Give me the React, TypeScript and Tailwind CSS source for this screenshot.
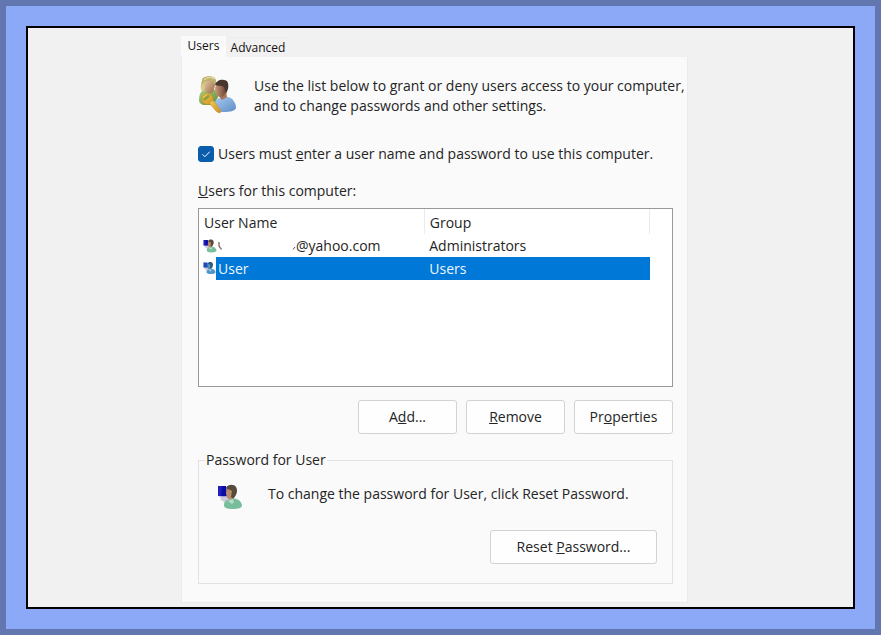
import React, { useState } from "react";

function AccountsIcon() {
  return (
    <svg viewBox="0 0 40 40" className="h-10 w-10 shrink-0" aria-hidden="true">
      <defs>
        <linearGradient id="hair" x1="0" y1="0" x2="1" y2="1">
          <stop offset="0" stopColor="#b9ad62" />
          <stop offset="0.45" stopColor="#d9cf92" />
          <stop offset="1" stopColor="#8f8440" />
        </linearGradient>
        <linearGradient id="faceA" x1="0" y1="0" x2="1" y2="1">
          <stop offset="0" stopColor="#e8c8a8" />
          <stop offset="1" stopColor="#9c6a48" />
        </linearGradient>
        <linearGradient id="faceB" x1="0" y1="0" x2="1" y2="0">
          <stop offset="0" stopColor="#c99a7c" />
          <stop offset="1" stopColor="#6d4431" />
        </linearGradient>
        <linearGradient id="shirtA" x1="0" y1="0" x2="1" y2="1">
          <stop offset="0" stopColor="#b4cf7c" />
          <stop offset="1" stopColor="#5f8c38" />
        </linearGradient>
        <linearGradient id="shirtB" x1="0" y1="0" x2="1" y2="1">
          <stop offset="0" stopColor="#a9cdf1" />
          <stop offset="1" stopColor="#5d8cc7" />
        </linearGradient>
        <linearGradient id="key" x1="0" y1="0" x2="1" y2="1">
          <stop offset="0" stopColor="#f1ce55" />
          <stop offset="1" stopColor="#d08e24" />
        </linearGradient>
      </defs>
      <path d="M1 25c0-6 2-9 6-11h8c3 1 5 4 5 8l-4 8H5c-3-1-4-3-4-5z" fill="url(#shirtA)" />
      <path d="M3 15C2 8 4 3 9 1.500c5-1.500 9 1 9 5 0 2 0 4-2 6L6 17z" fill="url(#hair)" />
      <ellipse cx="11.500" cy="11.500" rx="5" ry="7" fill="url(#faceA)" />
      <path d="M4 9c3-4 8-4 13-2l1-2C15 1 7 0 4 4z" fill="#bdb068" />
      <path d="M6 5c3-3 7-3 10-1" fill="none" stroke="#e4dbaa" strokeWidth="1.200" />
      <path d="M16 32c0-6 3-9 8-10h6c4 1 8 5 8 11-1 3-6 4-12 4-6 0-10-1-10-5z" fill="url(#shirtB)" />
      <path d="M20 20l4 5 5-3-1-5z" fill="#a97456" />
      <ellipse cx="22.500" cy="14.500" rx="5.500" ry="7.500" fill="url(#faceB)" />
      <path d="M17 10c1-4 5-6 9-5 4 0 5 4 4 9l-2 5-2-7c-3-2-6-1-9-2z" fill="#49372d" />
      <circle cx="9.500" cy="24" r="5.500" fill="url(#key)" stroke="#bc8b26" strokeWidth="0.600" />
      <path d="M6.500 24.500l4-3.500" stroke="#8b9d3c" strokeWidth="2.400" strokeLinecap="round" />
      <path d="M11 28l4-3 4 5 4 6-1 2-3-1z" fill="url(#key)" stroke="#c18a2b" strokeWidth="0.500" />
    </svg>
  );
}

function UserIcon({ className, selected = false }: { className: string; selected?: boolean }) {
  const shirt = selected ? "#4e96c9" : "#78bd9c";
  const screen = selected ? "#1550b8" : "#0b0ba8";
  const hair = selected ? "#245b86" : "#594a3c";
  const face = selected ? "#5c8db2" : "#b98b68";
  return (
    <svg viewBox="0 0 26 26" className={className} aria-hidden="true">
      <path d="M1 2h8l2 11-10-1z" fill={screen} />
      <path d="M1 2h4L4 12H1z" fill="#4040d0" opacity="0.400" />
      <path d="M3 13l8-1 2 4-4 3-5-3z" fill="#c9cbdc" />
      <path d="M7 21c0-4 3-5 7-6 6-2 11 3 11 6.500 0 2.500-4 3.500-9 3.500-6 0-9-1-9-4z" fill={shirt} />
      <path d="M11 17l5-2 1 3-2 2z" fill="#d3eadc" opacity="0.700" />
      <ellipse cx="13" cy="9" rx="4" ry="6.500" fill={face} />
      <path d="M9 4c2-4 8-4 10-1 2 3 1 8-3 12l-2-2 1-6c-2-2-4-1-6-3z" fill={hair} />
    </svg>
  );
}

const buttonClass =
  "h-[34px] rounded-[3px] border border-[#d2d2d2] bg-[#fefefe] text-center hover:bg-[#f3f7fb]";

export default function App() {
  const [required, setRequired] = useState(true);

  return (
    <div className="flex min-h-screen flex-col border-[6px] border-[#6277b0] bg-[#8ca9f8] p-5 font-['Open_Sans','Noto_Sans',sans-serif] text-[14px] leading-5 text-[#242424]">
      <main className="flex flex-1 justify-center border-2 border-black bg-[#f1f1f1] pt-2 pr-3 pb-1">
        <div className="flex w-full max-w-[507px] flex-col">
          <div role="tablist" className="flex h-[21px] items-end text-[12px] leading-5 text-[#111111]">
            <button role="tab" aria-selected="true" className="h-[21px] w-[45px] bg-[#fafafa] pb-[2px] text-center">
              Users
            </button>
            <button role="tab" aria-selected="false" className="h-5 w-16 border-t border-[#ededed] text-center">
              Advanced
            </button>
          </div>

          <section className="flex-1 border border-t-0 border-[#ebebeb] bg-[#fafafa] pt-[18px] pr-[14px] pb-4 pl-4">
            <div className="flex gap-4">
              <AccountsIcon />
              <p className="pt-px whitespace-nowrap">
                Use the list below to grant or deny users access to your computer,
                <br />
                and to change passwords and other settings.
              </p>
            </div>

            <label className="mt-7 flex h-5 items-center gap-1">
              <span className="grid h-4 w-4 grid-cols-1">
                <input
                  type="checkbox"
                  checked={required}
                  onChange={(e) => setRequired(e.target.checked)}
                  className="col-start-1 row-start-1 h-4 w-4 appearance-none rounded-[3px] border border-[#0a5cad] bg-white checked:bg-[#0a5cad]"
                />
                <svg viewBox="0 0 16 16" className="pointer-events-none col-start-1 row-start-1 h-4 w-4" aria-hidden="true">
                  <path d="M4.500 8.300l2.400 2.400 4.800-5" fill="none" stroke="#ffffff" strokeWidth="1" />
                </svg>
              </span>
              <span>
                Users must <u>e</u>nter a user name and password to use this computer.
              </span>
            </label>

            <h2 className="mt-[17px]">
              <u>U</u>sers for this computer:
            </h2>

            <div className="mt-[7px] h-[179px] border border-[#999999] bg-white pr-[22px]">
              <table className="w-full table-fixed border-collapse text-left">
                <thead>
                  <tr className="h-[25px]">
                    <th className="border-r border-[#ebebeb] pt-[2px] pl-[5px] font-normal">User Name</th>
                    <th className="border-r border-[#ebebeb] pt-[2px] pl-[5px] font-normal">Group</th>
                  </tr>
                </thead>
                <tbody>
                  <tr className="h-[23px]">
                    <td className="p-0">
                      <div className="flex h-[23px] items-center pl-1">
                        <UserIcon className="h-[14px] w-[14px]" />
                        <svg viewBox="0 0 4 8" className="ml-px h-2 w-1" aria-hidden="true">
                          <path d="M1 0v4l2.500 3.500" fill="none" stroke="#77594c" strokeWidth="1.200" />
                        </svg>
                        <svg viewBox="0 0 4 8" className="ml-[70px] h-2 w-1" aria-hidden="true">
                          <path d="M3 5L1 7.500" fill="none" stroke="#555555" strokeWidth="1" />
                        </svg>
                        <span>@yahoo.com</span>
                      </div>
                    </td>
                    <td className="p-0 pl-[5px]">Administrators</td>
                  </tr>
                  <tr className="h-[23px] text-[#eef6ff]" aria-selected="true">
                    <td className="p-0">
                      <div className="flex h-[23px] pl-1">
                        <UserIcon selected className="mt-1 h-[14px] w-[13px]" />
                        <span className="flex-1 bg-[#0078d7] pl-[2px] leading-[23px]">User</span>
                      </div>
                    </td>
                    <td className="bg-[#0078d7] p-0 pl-[5px] leading-[23px]">Users</td>
                  </tr>
                </tbody>
              </table>
            </div>

            <div className="mt-[13px] flex justify-end gap-[9px]">
              <button className={buttonClass + " w-[99px]"}>
                A<u>d</u>d...
              </button>
              <button className={buttonClass + " w-[99px]"}>
                <u>R</u>emove
              </button>
              <button className={buttonClass + " w-[99px]"}>
                Pr<u>o</u>perties
              </button>
            </div>

            <fieldset className="mt-4 border border-[#e2e2e2] pr-[15px] pb-[19px] pl-[18px]">
              <legend className="-ml-3 px-px">Password for User</legend>
              <div className="mt-[14px] flex gap-[25px]">
                <UserIcon className="h-[26px] w-[26px]" />
                <p className="whitespace-nowrap">To change the password for User, click Reset Password.</p>
              </div>
              <div className="mt-5 flex justify-end">
                <button className={buttonClass + " w-[167px]"}>
                  Reset <u>P</u>assword...
                </button>
              </div>
            </fieldset>
          </section>
        </div>
      </main>
    </div>
  );
}
